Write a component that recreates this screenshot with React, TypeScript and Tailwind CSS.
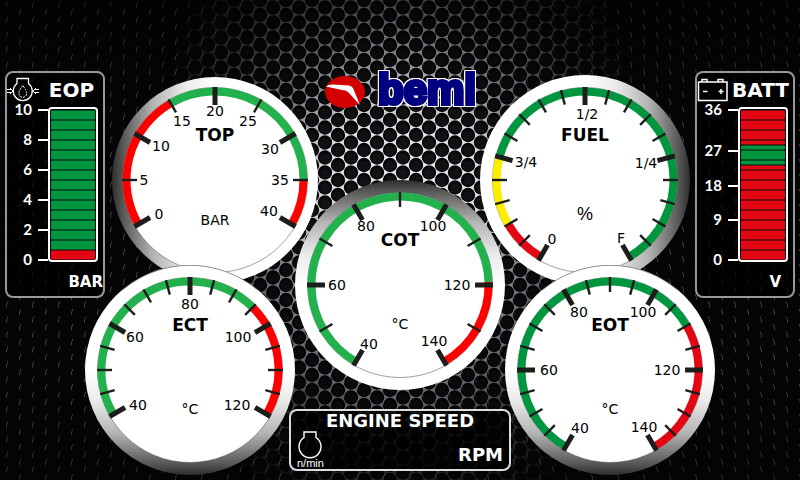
import React from "react";

type Label = { text: string; x: number; y: number };
type Band = { from: number; to: number; color: string };
type Shade = "left" | "right" | "top" | "bottom";

type DialProps = {
  id: string;
  title: string;
  unit: string;
  unitY: number;
  sweep: number;
  step: number;
  majorStep: number;
  bands: Band[];
  labels: Label[];
  shade: Shade;
  radius?: number;
  rim?: boolean;
};

const GREEN = "#22b14c";
const RED = "#ff0000";
const DEEP_GREEN = "#009640";
const DEEP_RED = "#e30613";
const YELLOW = "#ffed00";
const C = 105;

function polar(angle: number, r: number): [number, number] {
  const a = (angle * Math.PI) / 180;
  return [C + r * Math.sin(a), C - r * Math.cos(a)];
}

function arc(from: number, to: number, r: number) {
  const [x1, y1] = polar(from, r);
  const [x2, y2] = polar(to, r);
  return `M${x1} ${y1}A${r} ${r} 0 ${to - from > 180 ? 1 : 0} 1 ${x2} ${y2}`;
}

const shadeVectors: Record<Shade, { x1: number; y1: number; x2: number; y2: number }> = {
  left: { x1: 0, y1: 0, x2: 1, y2: 0 },
  right: { x1: 1, y1: 0, x2: 0, y2: 0 },
  top: { x1: 0, y1: 0, x2: 0, y2: 1 },
  bottom: { x1: 0, y1: 1, x2: 0, y2: 0 },
};

function Dial(p: DialProps) {
  const ticks: number[] = [];
  for (let a = -p.sweep; a <= p.sweep; a += p.step) ticks.push(a);
  return (
    <svg viewBox="0 0 210 210" className="relative block size-[210px] shrink-0" role="img" aria-label={p.title}>
      <defs>
        <linearGradient id={p.id} {...shadeVectors[p.shade]}>
          <stop offset="0" stopColor="#2e2e2c" />
          <stop offset="0.06" stopColor="#5c5c5a" />
          <stop offset="0.2" stopColor="#b4b4b4" />
          <stop offset="0.36" stopColor="#ececec" />
          <stop offset="0.5" stopColor="#ffffff" />
        </linearGradient>
      </defs>
      <circle cx={C} cy={C} r={p.radius ?? 105} fill={`url(#${p.id})`} />
      {p.rim && <path d={arc(-40, 40, 104.7)} fill="none" stroke="#444" strokeWidth="0.6" />}
      <circle cx={C} cy={C} r="92.5" fill="#fff" stroke="#444" strokeWidth="0.5" />
      {p.bands.map((b) => (
        <path key={b.from} d={arc(b.from, b.to, 88.5)} fill="none" stroke={b.color} strokeWidth="8" />
      ))}
      {ticks.map((a) => {
        const major = (a + p.sweep) % p.majorStep === 0;
        const [x1, y1] = polar(a, 93);
        const [x2, y2] = polar(a, major ? 75 : 78);
        return (
          <line key={a} x1={x1} y1={y1} x2={x2} y2={y2} stroke="#1d1d1b" strokeWidth={major ? 5 : 2.4} />
        );
      })}
      <g
        className="font-['DejaVu_Sans',sans-serif] text-[14px]"
        fill="#000"
        textAnchor="middle"
      >
        {p.labels.map((l) => (
          <text key={l.text} x={l.x} y={l.y + 5}>
            {l.text}
          </text>
        ))}
        <text x="105" y="66" className="text-[17px] font-bold">
          {p.title}
        </text>
        {p.unit === "%" ? (
          <text x="105" y={p.unitY + 6} className="font-['Liberation_Sans',sans-serif] text-[18px]">
            %
          </text>
        ) : (
          <text x="105" y={p.unitY + 5}>
            {p.unit}
          </text>
        )}
      </g>
    </svg>
  );
}

function Honeycomb() {
  return (
    <svg
      className="absolute inset-0 h-full w-full"
      viewBox="0 0 800 480"
      preserveAspectRatio="xMidYMid slice"
      aria-hidden="true"
    >
      <defs>
        <pattern id="cells" width="26" height="15" patternUnits="userSpaceOnUse">
          <rect width="26" height="15" fill="#f4f0f8" />
          {[
            [0, 0],
            [26, 0],
            [0, 15],
            [26, 15],
            [13, 7.5],
          ].map(([x, y]) => (
            <g key={`${x}-${y}`}>
              <circle cx={x} cy={y} r="7.2" fill="#070709" />
              <circle cx={x} cy={y + 1} r="5" fill="#121214" />
            </g>
          ))}
        </pattern>
        <pattern id="glintsLeft" width="26" height="15" patternUnits="userSpaceOnUse">
          <g fill="none" stroke="#c4c4d0" strokeWidth="0.9">
            <path d="M8 1.500Q6 4.500 6.500 7.500" />
            <path d="M21 9Q19 12 19.500 15" />
          </g>
        </pattern>
        <pattern id="glintsRight" width="26" height="15" patternUnits="userSpaceOnUse">
          <g fill="none" stroke="#c4c4d0" strokeWidth="0.9">
            <path d="M6 1.500Q8 4.500 7.500 7.500" />
            <path d="M19 9Q21 12 20.500 15" />
          </g>
        </pattern>
        <radialGradient id="spot" gradientUnits="userSpaceOnUse" cx="0" cy="0" r="1" gradientTransform="translate(400 190) scale(250 370)">
          <stop offset="0" stopColor="#fff" />
          <stop offset="0.3" stopColor="#eee" />
          <stop offset="0.5" stopColor="#888" />
          <stop offset="0.75" stopColor="#3a3a3a" />
          <stop offset="1" stopColor="#000" />
        </radialGradient>
        <linearGradient id="ceiling" x1="0" y1="0" x2="0" y2="1">
          <stop offset="0" stopColor="#000" stopOpacity="0.5" />
          <stop offset="0.28" stopColor="#000" stopOpacity="0" />
          <stop offset="0.75" stopColor="#000" stopOpacity="0" />
          <stop offset="1" stopColor="#000" stopOpacity="0.3" />
        </linearGradient>
        <mask id="lit">
          <rect width="800" height="480" fill="url(#spot)" />
        </mask>
      </defs>
      <rect width="800" height="480" fill="#050508" />
      <rect width="400" height="480" fill="url(#glintsLeft)" opacity="0.35" />
      <rect x="400" width="400" height="480" fill="url(#glintsRight)" opacity="0.35" />
      <rect width="800" height="480" fill="url(#cells)" mask="url(#lit)" />
      <rect width="800" height="480" fill="url(#ceiling)" />
    </svg>
  );
}

type Cell = { h: number; color: string };

function BarMeter({ scale, cells, label }: { scale: { text: string; y: number }[]; cells: Cell[]; label: string }) {
  let y = 8;
  const placed = cells.map((c) => {
    const cell = { ...c, y };
    y += c.h;
    return cell;
  });
  return (
    <svg viewBox="0 0 96 164" className="block w-full overflow-visible" role="img" aria-label={label}>
      <rect x="42" y="6" width="48" height="153" rx="3" fill="#0a0a0a" stroke="#fff" strokeWidth="2" />
      {placed.map((c) => (
        <rect key={c.y} x="44" y={c.y + 0.5} width="44" height={c.h - 1} rx="1" fill={c.color} />
      ))}
      {scale.map((s) => (
        <g key={s.text} fill="#fff">
          <rect x="31" y={s.y - 1} width="10" height="2" />
          <text
            x="25"
            y={s.y + 5}
            textAnchor="end"
            className="font-['Lato',sans-serif] text-[15px] font-bold"
          >
            {s.text}
          </text>
        </g>
      ))}
    </svg>
  );
}

function SidePanel({
  icon,
  title,
  unit,
  unitClass,
  children,
}: {
  icon: React.ReactNode;
  title: string;
  unit: string;
  unitClass: string;
  children: React.ReactNode;
}) {
  return (
    <section className="mt-[71px] w-[100px] shrink-0 rounded-lg border-2 border-[#999] bg-black/70 text-white">
      <header className="flex h-[29px] items-center justify-between pt-1">
        {icon}
        <h2 className="flex-1 text-center text-[20px] leading-6 font-bold">{title}</h2>
      </header>
      {children}
      <p className={`h-[30px] text-right text-[15px] leading-8 font-bold ${unitClass}`}>{unit}</p>
    </section>
  );
}

function OilIcon() {
  return (
    <svg viewBox="0 0 33 26" className="h-[26px] w-[33px] shrink-0" fill="none" stroke="#fff" strokeWidth="1.3" aria-hidden="true">
      <path d="M10 6.500V1.500H21.500V6.500A9.500 9.500 0 1 1 10 6.500Z" />
      <path d="M15.800 8.500Q11.500 14 12 16.500A3.800 3.800 0 0 0 19.600 16.500Q20 14 15.800 8.500Z" strokeWidth="1" strokeDasharray="2 1" />
      <path d="M0 12.500H4M0 15.500H4M3 11L6 14L3 17M32 12.500H28M32 15.500H28M29 11L26 14L29 17" strokeWidth="1" />
    </svg>
  );
}

function BatteryIcon() {
  return (
    <svg viewBox="0 0 31 24" className="h-[24px] w-[31px] shrink-0" fill="none" stroke="#fff" strokeWidth="1.5" aria-hidden="true">
      <path d="M1.500 4H30V22.500H1.500ZM5 4V1.500H10V4M21 4V1.500H26V4" />
      <path d="M6 13.500H10.500M21.500 13.500H26.500M24 11V16" />
    </svg>
  );
}

function EngineIcon() {
  return (
    <svg viewBox="0 0 24 28" className="h-[28px] w-[24px]" fill="none" stroke="#fff" strokeWidth="1.4" aria-hidden="true">
      <path d="M6 6.500V1H18V6.500A11 11 0 1 1 6 6.500Z" />
    </svg>
  );
}

function Logo() {
  return (
    <div className="flex h-[42px] items-center justify-center gap-2 pl-1">
      <svg viewBox="0 0 40 32" className="mt-2 h-[32px] w-[40px] shrink-0" aria-hidden="true">
        <ellipse cx="20" cy="16" rx="20" ry="16" fill="#d20000" />
        <path d="M1 10.500Q3 8.500 8 8.500L24 9.500Q27 10 28 12L35 29L23 16Q21 14 17 14Z" fill="#fff" />
      </svg>
      <svg viewBox="0 0 106 42" className="h-[42px] w-[106px] shrink-0 overflow-visible" role="img" aria-label="beml">
        <text
          x="54"
          y="37"
          textAnchor="middle"
          fill="#000080"
          stroke="#000080"
          strokeWidth="4"
          className="font-['Liberation_Sans',sans-serif] text-[42px] font-bold [filter:drop-shadow(1px_0_0_#fff)_drop-shadow(-1px_0_0_#fff)_drop-shadow(0_1px_0_#fff)_drop-shadow(0_-1px_0_#fff)]"
        >
          beml
        </text>
      </svg>
    </div>
  );
}

const eopCells: Cell[] = Array.from({ length: 15 }, (_, i) => ({
  h: 10,
  color: i === 14 ? DEEP_RED : DEEP_GREEN,
}));

const battCells: Cell[] = [
  { h: 10, color: DEEP_RED },
  { h: 10, color: DEEP_RED },
  { h: 10, color: DEEP_RED },
  { h: 5, color: DEEP_RED },
  { h: 5, color: DEEP_GREEN },
  { h: 10, color: DEEP_GREEN },
  { h: 5, color: DEEP_GREEN },
  { h: 5, color: DEEP_RED },
  ...Array.from({ length: 9 }, () => ({ h: 10, color: DEEP_RED })),
];

export default function App() {
  return (
    <main className="relative isolate min-h-screen w-full overflow-hidden bg-black font-['DejaVu_Sans',sans-serif]">
      <Honeycomb />
      <div className="relative flex items-start justify-between px-[5px]">
        <SidePanel icon={<OilIcon />} title="EOP" unit="BAR" unitClass="pr-0">
          <BarMeter
            label="Engine oil pressure"
            cells={eopCells}
            scale={[
              { text: "10", y: 8 },
              { text: "8", y: 38 },
              { text: "6", y: 68 },
              { text: "4", y: 98 },
              { text: "2", y: 128 },
              { text: "0", y: 158 },
            ]}
          />
        </SidePanel>

        <div className="-mx-5 flex shrink-0">
          <div className="w-[210px] pt-[75px]">
            <div className="ml-[25px]">
              <Dial
                id="top"
                title="TOP"
                unit="BAR"
                unitY={145}
                sweep={120}
                step={30}
                majorStep={60}
                shade="left"
                radius={103}
                bands={[
                  { from: -120, to: -30, color: RED },
                  { from: -30, to: 90, color: GREEN },
                  { from: 90, to: 120, color: RED },
                ]}
                labels={[
                  { text: "0", x: 49, y: 139 },
                  { text: "5", x: 34, y: 105 },
                  { text: "10", x: 51, y: 71 },
                  { text: "15", x: 72, y: 46 },
                  { text: "20", x: 105, y: 36 },
                  { text: "25", x: 138, y: 46 },
                  { text: "30", x: 160, y: 74 },
                  { text: "35", x: 170, y: 105 },
                  { text: "40", x: 159, y: 136 },
                ]}
              />
            </div>
            <div className="-mt-5">
              <Dial
                id="ect"
                title="ECT"
                unit="°C"
                unitY={144}
                sweep={120}
                step={15}
                majorStep={60}
                shade="bottom"
                rim
                bands={[
                  { from: -120, to: 45, color: GREEN },
                  { from: 45, to: 120, color: RED },
                ]}
                labels={[
                  { text: "40", x: 53, y: 140 },
                  { text: "60", x: 50, y: 72 },
                  { text: "80", x: 105, y: 39 },
                  { text: "100", x: 153, y: 72 },
                  { text: "120", x: 152, y: 140 },
                ]}
              />
            </div>
          </div>

          <div className="flex w-[210px] flex-col pt-[67px]">
            <Logo />
            <div className="mt-[71px]">
              <Dial
                id="cot"
                title="COT"
                unit="°C"
                unitY={144}
                sweep={150}
                step={30}
                majorStep={60}
                shade="top"
                bands={[
                  { from: -150, to: 88, color: GREEN },
                  { from: 88, to: 150, color: RED },
                ]}
                labels={[
                  { text: "40", x: 74, y: 164 },
                  { text: "60", x: 42, y: 105 },
                  { text: "80", x: 71, y: 46 },
                  { text: "100", x: 138, y: 46 },
                  { text: "120", x: 162, y: 105 },
                  { text: "140", x: 139, y: 161 },
                ]}
              />
            </div>
            <section className="relative -mx-[6px] mt-[19px] h-[62px] rounded-lg border-2 border-[#ddd] bg-black/75 px-[6px] text-white">
              <h2 className="text-center text-[18px] leading-5 font-bold">ENGINE SPEED</h2>
              <div className="flex items-end justify-between">
                <div className="flex flex-col items-center">
                  <EngineIcon />
                  <span className="font-['Liberation_Sans',sans-serif] text-[11px] leading-[8px]">n/min</span>
                </div>
                <span className="text-[18px] leading-6 font-bold">RPM</span>
              </div>
            </section>
          </div>

          <div className="w-[210px] pt-[75px]">
            <div className="-ml-[25px]">
              <Dial
                id="fuel"
                title="FUEL"
                unit="%"
                unitY={139}
                sweep={150}
                step={15}
                majorStep={75}
                shade="right"
                bands={[
                  { from: -150, to: -120, color: DEEP_RED },
                  { from: -120, to: -75, color: YELLOW },
                  { from: -75, to: 150, color: DEEP_GREEN },
                ]}
                labels={[
                  { text: "0", x: 72, y: 164 },
                  { text: "3/4", x: 46, y: 87 },
                  { text: "1/2", x: 107, y: 39 },
                  { text: "1/4", x: 166, y: 88 },
                  { text: "F", x: 141, y: 163 },
                ]}
              />
            </div>
            <div className="-mt-5">
              <Dial
                id="eot"
                title="EOT"
                unit="°C"
                unitY={144}
                sweep={150}
                step={15}
                majorStep={60}
                shade="bottom"
                rim
                bands={[
                  { from: -150, to: 60, color: DEEP_GREEN },
                  { from: 60, to: 150, color: DEEP_RED },
                ]}
                labels={[
                  { text: "40", x: 75, y: 163 },
                  { text: "60", x: 44, y: 105 },
                  { text: "80", x: 74, y: 47 },
                  { text: "100", x: 138, y: 47 },
                  { text: "120", x: 162, y: 105 },
                  { text: "140", x: 139, y: 162 },
                ]}
              />
            </div>
          </div>
        </div>

        <SidePanel icon={<BatteryIcon />} title="BATT" unit="V" unitClass="pr-3">
          <BarMeter
            label="Battery voltage"
            cells={battCells}
            scale={[
              { text: "36", y: 8 },
              { text: "27", y: 49 },
              { text: "18", y: 84 },
              { text: "9", y: 118 },
              { text: "0", y: 158 },
            ]}
          />
        </SidePanel>
      </div>
    </main>
  );
}
